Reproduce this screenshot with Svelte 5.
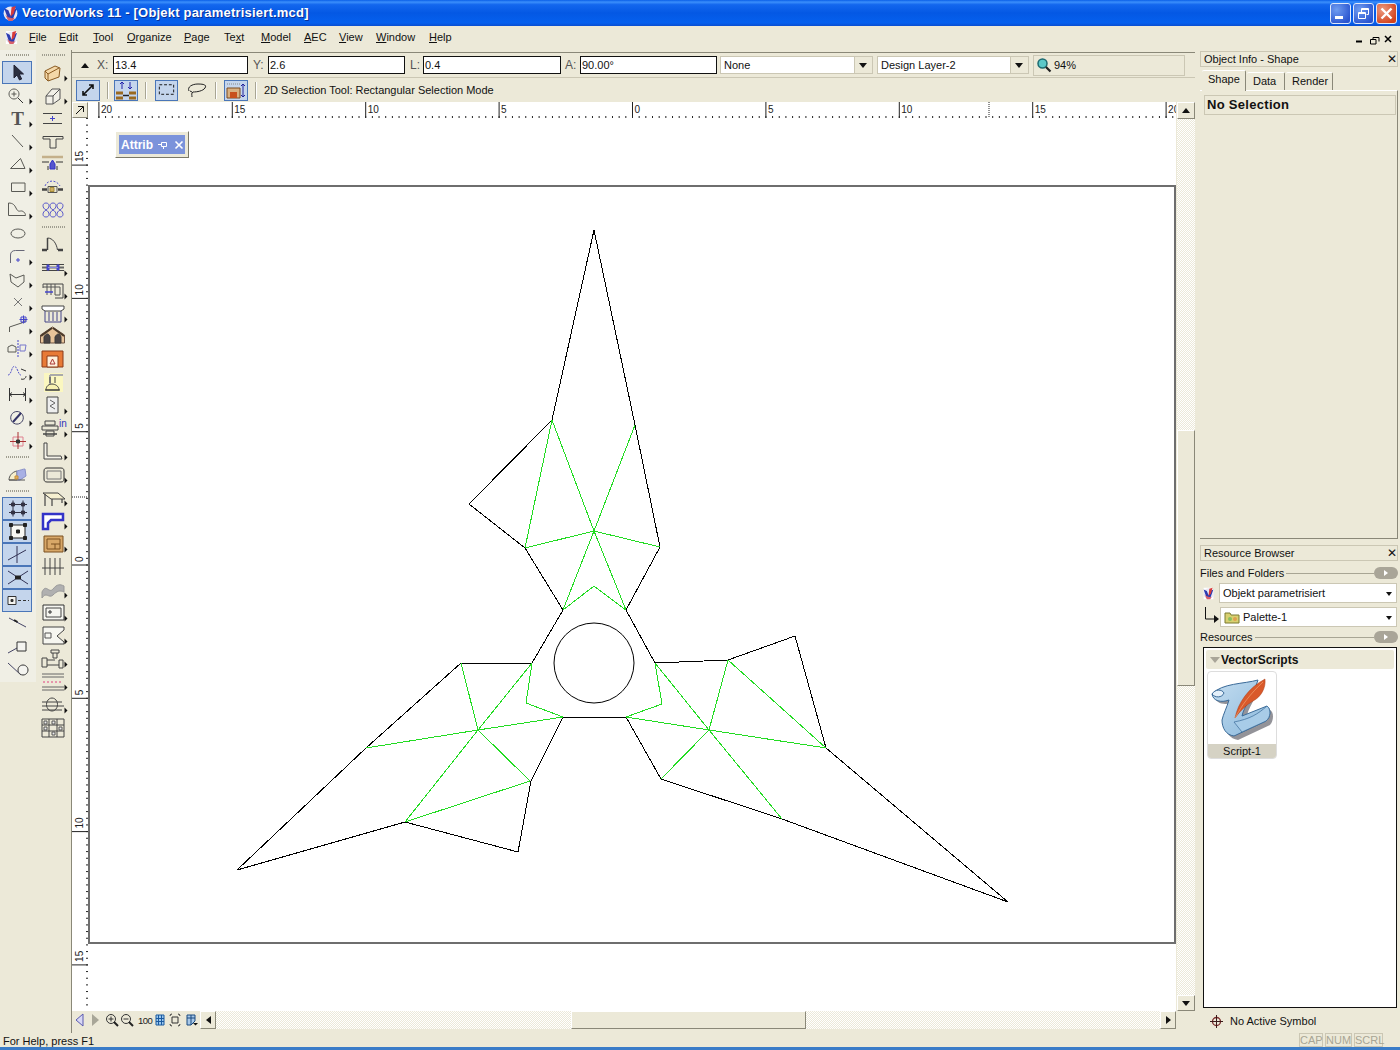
<script>
  const menus = [['F', 'ile', 29], ['E', 'dit', 59], ['T', 'ool', 93], ['O', 'rganize', 127], ['P', 'age', 184], ['Te', 'xt', 224, 1], ['M', 'odel', 261], ['A', 'EC', 304], ['V', 'iew', 339], ['W', 'indow', 376], ['H', 'elp', 429]];

  const g = '#5a5a55';
  // each part: [path, stroke, fill]
  const leftTools = [
    { on: 1, parts: [['M14 4v13l3-3 2.5 5 2.2-1-2.5-5h4.3z', '#223', '#2b3040']] },
    { fly: 1, parts: [['M14 5a5 5 0 1 0 .01 0zM11.5 10h5M14 7.5v5', g], ['M18 14l5 5', '#333']] },
    { fly: 1, text: 'T' },
    { fly: 1, parts: [['M12 5l11 12', g]] },
    { fly: 1, parts: [['M10.5 15.5l10-10 4.5 10z', g]] },
    { fly: 1, parts: [['M11.5 7h13.5v8.5h-13.5z', g]] },
    { fly: 1, parts: [['M8.5 4v12.500h17c0-3-3-5-5-4.500s-3 0-4.500-3-3-5-7.500-5z', g]] },
    { parts: [['M11 11.500a7 4.500 0 1 0 14 0a7 4.500 0 1 0-14 0z', g]] },
    { fly: 1, parts: [['M10.500 18v-8c0-3 2-4.500 5-4.500h9', '#667'], ['M16 15h4M18 13v4', '#44c']] },
    { fly: 1, parts: [['M10 6l6 4 8-3 0 7-6 5-7-5z', g]] },
    { fly: 1, parts: [['M14 7l8 8M22 7l-8 8', '#777']] },
    { fly: 1, parts: [['M9.500 18v-5l12-4M21 9l4-1v-2l-1.500-2', g], ['M21 3h5v5h-5zM23.500 1.500v8M19.500 5.500h8', '#44c']] },
    { fly: 1, parts: [['M8 15v-5l4-2 4 2v5z', g], ['M18 3v17', '#44c', 'none', 1, '2 1'], ['M20 8h6l-1 6h-5z', '#77c']] },
    { fly: 1, parts: [['M8 15c2 0 3-3 4-6s3-4 5 0 2 6 4 6', '#55c', 'none', 1, '2 1'], ['M21 9l5 2M21 19c3 1 5-1 5-3', '#333']] },
    { fly: 1, parts: [['M9.500 5v13M25.500 5v13M9.500 11.500h16M12 9.500l-2.500 2 2.500 2M23 9.500l2.500 2-2.500 2', '#333']] },
    { fly: 1, parts: [['M17 5.500a6.300 6.300 0 1 0 .01 0z', '#446'], ['M13 16l8-9', '#336', 'none', 2]] },
    { fly: 1, parts: [['M13 8h10v9h-10z', '#e08090'], ['M18 3v17M10 12.500h16', '#a33'], ['M16.500 11h3v3h-3z', '#333', '#333']] },
    { gap: 1, parts: [['M9 17c0-4 3-8 8-9v9z', '#555', '#f6eecc'], ['M17 8c4-1 6-2 8-2l1 7-6 4h-3z', '#8890c8', '#a8b0e4'], ['M9 17h16', '#555'], ['M15 13h3v3h-3z', '#c89038', '#e0b060']] },
    { gap: 1, on: 1, parts: [['M9 7.500h18M9 15.500h18M13 3.500v16M23 3.500v16', '#334'], ['M11.500 6h3v3h-3zM21.500 6h3v3h-3zM11.500 14h3v3h-3zM21.500 14h3v3h-3z', '#334', '#334']] },
    { on: 1, parts: [['M11 5h14v13h-14z', '#222', '#f8f8f4'], ['M9.500 3.500h3v3h-3zM23.500 3.500h3v3h-3zM9.500 16.500h3v3h-3zM23.500 16.500h3v3h-3zM16.500 10h3v3h-3z', '#222', '#222']] },
    { on: 1, parts: [['M17 3v17M8 17l18-10', '#335']] },
    { on: 1, parts: [['M8 5l20 13M8 18l20-13', '#335'], ['M15.500 10h5v3h-5z', '#222', '#222']] },
    { on: 1, parts: [['M8 7.500h8v8h-8z', '#333', '#f4f4f0'], ['M11 10.500h2v2h-2z', '#333', '#333'], ['M18 11.500h11', '#333', 'none', 1, '3 2']] },
    { parts: [['M9 6l17 9', '#446'], ['M14 8l3.500 2', '#222', 'none', 2]] },
    { parts: [['M8 18l9-5', '#446'], ['M17 7h9v9h-9z', '#333', '#f4f4f0']] },
    { parts: [['M8 5l13 12', '#446'], ['M23 7a5 5 0 1 0 .01 0z', '#333', '#f4f4f0']] },
  ];

  const o = '#8a5a20';
  const rightTools = [
    { fly: 1, parts: [['M10 10l10-5 5 2-1 9-11 4-3-3z', o, '#f4d8a8'], ['M10 10l3 3 11-6M13 13v7', o]] },
    { fly: 1, parts: [['M11 12l6-7h8v10l-7 5h-7z', '#555', '#f2f0e8'], ['M11 12h7v8M18 12l7-7', '#555']] },
    { parts: [['M8 6.500h19M8 16.500h19', '#444', 'none', 1.200], ['M17.500 9v5M15 11.500h5', '#44c']] },
    { parts: [['M8 6.500h20v2.500h-7v9h-6v-9h-7z', '#444']] },
    { parts: [['M7 4h21', '#c4b08a', 'none', 2.500], ['M7 9h7M21 9h7', '#333', 'none', 1], ['M15 16v-5l2.500-4 2.500 4v5z', '#33c', '#55c'], ['M13 17v-4M22 17v-4', '#333']] },
    { parts: [['M7 13.500h5M23 13.500h5', '#444', 'none', 2.500], ['M13 10.500h9v6h-9z', '#555'], ['M10 10c2-6 11-7 15 0', '#55c', 'none', 1, '2 1.500'], ['M15 11.500h4v4h-4z', '#a38a3a', '#d0b060']] },
    { parts: [['M11 4c-4 0-4 5 0 7-4 2-4 7 0 7s4-5 0-7c4-2 4-7 0-7zM18 4c-4 0-4 5 0 7-4 2-4 7 0 7s4-5 0-7c4-2 4-7 0-7zM25 4c-4 0-4 5 0 7-4 2-4 7 0 7s4-5 0-7c4-2 4-7 0-7z', '#5a5acc']] },
    { gap: 1, parts: [['M7 17h5M23 17h5', '#444', 'none', 2.500], ['M12.500 17v-12c5 0 9 5 10 12', '#444'], ['M12.500 5v12', '#444', 'none', 1.500]] },
    { fly: 1, parts: [['M7 8.500h22M7 14.500h22', '#444'], ['M7 11.500h22', '#666', 'none', 2], ['M12 9h2v5h-2zM22 9h2v5h-2z', '#44c', '#44c'], ['M13 11.500h10', '#88d']] },
    { fly: 1, parts: [['M8 5h20v14h-8', '#444'], ['M8 8h17v8h-5M8 5v4M12 5v11M16 5v11M20 5v11', '#555'], ['M10 13h8', '#44c', 'none', 1.500]] },
    { fly: 1, parts: [['M7 4h22v3l-3 2h-16l-3-2z', '#444', '#fff'], ['M10 9v11h16v-11M14 10v9M18 10v9M22 10v9', '#448']] },
    { parts: [['M17.500 2l12 8v8h-24v-8z', '#6a5040', '#e8c49a'], ['M9 18v-6c2-4 5-4 6 0v6zM20 18v-6c2-4 5-4 6 0v6z', '#3a3a3a', '#4a4444'], ['M17 3l-11 8M18 3l11 8', '#4a3a2a', 'none', 2]] },
    { parts: [['M7 3h21v16h-21z', '#8a3a18', '#e87a36'], ['M12 8h11v11h-11z', '#8a3a18', '#fff0dc'], ['M15 16l2.500-5 2.500 5z', '#a33', 'none']] },
    { y: 1, parts: [['M15 4h13M15 4v9', '#aaa', 'none', 2], ['M15 6v6M20 6v6', '#444'], ['M11 19c0-4 3-6 6-6s7 2 7 6z', '#444', '#f6f0b0'], ['M10 19h15', '#444', 'none', 1.200]] },
    { fly: 1, parts: [['M12 3h11v16h-11z', '#444', '#eee'], ['M15 6l5 3-5 3 5 3', '#666']] },
    { fly: 1, blue: 'in', parts: [['M10 4h10v4h-10zM7 9h16v4H7zM11 14h8v5h-8z', '#444'], ['M8 17h14', '#444', 'none', 1.500]] },
    { fly: 1, parts: [['M9 3h3v13h14l1 3h-18z', '#444', '#f4f2e8']] },
    { fly: 1, parts: [['M9 8c0-2 1-3 3-3h14c2 0 3 1 3 3v8c0 2-1 3-3 3h-14c-2 0-3-1-3-3z', '#333'], ['M12 8h14v8h-14z', '#777']] },
    { fly: 1, parts: [['M8 7h15l7 6h-14z', '#444', '#f6f0d0'], ['M10 8v12M17 13v7M27 13v4', '#444', 'none', 1.200]] },
    { fly: 1, parts: [['M8 5h20v6h-12l-3 3v6h-5z', '#3333c8', '#fff', 2.500]] },
    { fly: 1, parts: [['M9 4h19v16h-19z', '#7a5020', '#d8a868'], ['M12 7h13v10h-13zM16 12h9M20 12v5', '#7a5020']] },
    { parts: [['M10 3v17M15 3v17M20 3v17M25 3v17M7 13h22', '#444']] },
    { fly: 1, parts: [['M7 14c4-9 7 2 11-3s7-5 11-3v6c-4-2-7-1-11 3s-7-4-11 3z', '#999', '#b0b0b0']] },
    { fly: 1, parts: [['M8 4h21v15h-21z', '#333', '#f6f6f0'], ['M11 7h15v9h-15z', '#444'], ['M14 10h2v2h-2z', '#333']] },
    { fly: 1, parts: [['M8 3h21v3l-7 6 7 6v2h-21z', '#444', '#f6f6f0'], ['M10 9h6v5h-6z', '#555']] },
    { fly: 1, parts: [['M7 11h5v9h-5zM12 13h8M12 18h12M24 13h4v8h-4zM16 3h8v3h-8zM18 6v5h4v-5', '#444']] },
    { fly: 1, parts: [['M7 4h22M7 7h22M7 17h22M7 20h22', '#666'], ['M8 12h20', '#e04080', 'none', 1, '2 2']] },
    { fly: 1, parts: [['M17 5a5.500 6.500 0 1 0 .01 0z', '#444'], ['M7 9h20M7 13h22M7 17h20', '#444']] },
    { parts: [['M7 3h22v18h-22zM7 9h22M7 15h22M14 3v18M22 3v18', '#444'], ['M9 5h3v3H9zM17 5h3v3h-3zM24 11h3v3h-3zM9 11h3v3H9zM17 16h3v3h-3z', '#555', '#eee']] },
  ];

  const base = 632.5;
  const step = 133.4;
  const hLabels = [];
  for (let n = -4; n <= 4; n++) hLabels.push({ x: base + n * step, t: String(Math.abs(n) * 5) });
  const hTicks = [];
  for (let x = base - 80 * 6.67; x < 1176; x += 6.67) hTicks.push(x);

  const vLabels = [];
  for (let n = -3; n <= 3; n++) vLabels.push({ y: 565 + n * 133.3, t: String(Math.abs(n) * 5) });
  const vTicks = [];
  for (let y = 565 - 67 * 6.665; y < 1011; y += 6.665) vTicks.push(y);

  const outline = '552,420 594,230 635,425 660,547 626,610 655,663 728,660 795,636 826,748 1008,902 782,819 661,779 626,717 563,717 531,781 518,852 405,822 237,870 366,748 461,663 532,663 563,610 525,548 469,504';
  const green = [
    'M594 531L552 420M594 531L635 425M594 531L525 548M594 531L660 547M594 531L563 610M594 531L626 610M552 420L525 548M563 610L594 586L626 610',
    'M478 730L461 663M478 730L532 663M478 730L366 748M478 730L563 717M478 730L405 822M478 730L530 781M405 822L530 781M532 663L526 703L563 717',
    'M709 730L626 717M709 730L655 663M709 730L728 660M709 730L826 748M709 730L661 779M709 730L782 819M728 660L826 748M655 663L662 704L626 717',
  ];
</script>

{#snippet tool(item)}
  <div class="tool" class:on={item.on} class:lamp={item.y}>
    <svg width="36" height="23" viewBox="0 0 36 23">
      {#if item.text}
        <text x="17.5" y="18" class="t-glyph" text-anchor="middle">{item.text}</text>
      {/if}
      {#if item.parts}
        {#each item.parts as [d, stroke, fill, sw, dash]}
          <path {d} {stroke} fill={fill || 'none'} stroke-width={sw || 1} stroke-dasharray={dash} />
        {/each}
      {/if}
      {#if item.blue}
        <text x="24" y="10" class="t-in">{item.blue}</text>
      {/if}
      {#if item.fly}
        <path d="M29.500 14.500l3 3-3 3z" fill="#111" />
      {/if}
    </svg>
  </div>
{/snippet}

{#snippet vwLogo(size, plate)}
  <svg width={size} height={size} viewBox="0 0 16 16">
    <path d="M2 1h10l2 2v12H2z" fill={plate} />
    <circle cx="8" cy="8" r="6.500" fill="#e8e8f4" />
    <path d="M2 3l4 11h4L14 3l-4 2-2 5-2-5z" fill="#2c3cb0" />
    <path d="M9 2l4-1-2 7-3 3z" fill="#d83a3a" />
    <path d="M3 9c2 3 6 4 9 3l-2 3H6z" fill="#d8606a" />
  </svg>
{/snippet}

{#snippet grip()}
  <div class="grip"></div>
{/snippet}

<div class="screen">
  <header class="titlebar">
    <span class="tlogo">{@render vwLogo(17, 'transparent')}</span>
    <span class="ttext">VectorWorks 11 - [Objekt parametrisiert.mcd]</span>
    <span class="tbtns">
      <span class="wbtn"><i class="w-min"></i></span>
      <span class="wbtn">
        <svg width="21" height="21" viewBox="0 0 21 21"><path d="M8.500 5.500h7v6h-2M5.500 9.500h7v6h-7zM8.500 5.500v4M5.500 10.500h7M8.500 6.500h7" stroke="#fff" fill="none" /></svg>
      </span>
      <span class="wbtn close">
        <svg width="21" height="21" viewBox="0 0 21 21"><path d="M5.500 5.500l10 10M15.500 5.500l-10 10" stroke="#fff" stroke-width="2.400" fill="none" /></svg>
      </span>
    </span>
  </header>

  <nav class="menubar">
    <span class="mlogo">{@render vwLogo(15, '#fff')}</span>
    {#each menus as m, i}
      <span class="menu" style="width: {(menus[i + 1] ? menus[i + 1][2] : m[2] + 30) - m[2]}px">
        {#if m[3]}Te<u>x</u>t{:else}<u>{m[0]}</u>{m[1]}{/if}
      </span>
    {/each}
    <span class="mdi">
      <svg width="44" height="12" viewBox="0 0 44 12">
        <path d="M3 8.500h6" stroke="#000" stroke-width="2" />
        <path d="M20 4.500h6v4M17.500 6.500h5.500v4.500h-5.500zM20 4.500v2" stroke="#000" fill="none" />
        <path d="M32 3l6 6M38 3l-6 6" stroke="#000" stroke-width="1.500" />
      </svg>
    </span>
  </nav>

  <main class="main">
    <aside class="palette">
      <div class="pcol one">
        {@render grip()}
        {#each leftTools as item}
          {#if item.gap}
            {@render grip()}
          {/if}
          {@render tool(item)}
        {/each}
      </div>
      <div class="pcol two">
        {@render grip()}
        {#each rightTools as item}
          {#if item.gap}
            {@render grip()}
          {/if}
          {@render tool(item)}
        {/each}
      </div>
    </aside>

    <section class="center">
      <div class="mode1">
        <span class="tri-up"></span>
        <span class="fl x">X:</span><span class="inp">13.4</span>
        <span class="fl">Y:</span><span class="inp y">2.6</span>
        <span class="fl l">L:</span><span class="inp l">0.4</span>
        <span class="fl a">A:</span><span class="inp y">90.00°</span>
        <span class="sel none">None<span class="sel-btn"></span></span>
        <span class="sel layer">Design Layer-2<span class="sel-btn"></span></span>
        <span class="zoomread">
          <svg width="16" height="16" viewBox="0 0 16 16">
            <circle cx="6.500" cy="6.500" r="4.500" fill="#5cc8c8" stroke="#1d6a70" stroke-width="1.500" />
            <path d="M10 10l4.500 4.500" stroke="#222" stroke-width="2.200" />
          </svg>
          94%
        </span>
      </div>

      <div class="mode2">
        <span class="mbtn on">
          <svg width="22" height="22" viewBox="0 0 22 22"><path d="M6 16L16 6M6 12v4h4M12 6h4v4" stroke="#111" stroke-width="1.600" fill="none" /></svg>
        </span>
        <i class="sep"></i>
        <span class="mbtn on m6">
          <svg width="22" height="22" viewBox="0 0 22 22">
            <path d="M1 14h7M14 14h7M1 19h7M14 19h7" stroke="#9a6a20" stroke-width="3" />
            <path d="M8 16.500h6" stroke="#222" stroke-width="1.500" />
            <path d="M7 10V3M5 5l2-2 2 2M15 3v7M13 8l2 2 2-2" stroke="#2222aa" fill="none" />
          </svg>
        </span>
        <i class="sep"></i>
        <span class="mbtn on m9 w23">
          <svg width="22" height="22" viewBox="0 0 22 22"><rect x="3.500" y="5.500" width="15" height="10" stroke="#111" stroke-dasharray="3 2" fill="none" /></svg>
        </span>
        <span class="mbtn w23">
          <svg width="22" height="22" viewBox="0 0 22 22"><path d="M3 12c-2-4 3-7 9-7s9 1 7 4-8 4-12 4c-2 1-1 3-1 5M6 13l-2-1" stroke="#222" fill="none" /></svg>
        </span>
        <i class="sep"></i>
        <span class="mbtn on m8">
          <svg width="22" height="22" viewBox="0 0 22 22">
            <path d="M2 5h13" stroke="#888" stroke-dasharray="1 1" />
            <path d="M2 9h13v10h-13z" fill="#d8b080" stroke="#7a4a20" />
            <path d="M5 13h7v6h-7z" fill="#c8501c" />
            <path d="M18 5v13M16 7l2-2 2 2M16 16l2 2 2-2" stroke="#22229a" fill="none" />
          </svg>
        </span>
        <i class="sep"></i>
        <span class="modetext">2D Selection Tool: Rectangular Selection Mode</span>
      </div>

      <div class="doc">
        <div class="corner">
          <svg width="12" height="12" viewBox="0 0 12 12"><path d="M2 10l7-7M4 2.500h5.500v5.500" stroke="#111" fill="none" /></svg>
        </div>
        <svg class="hruler" width="1088" height="16" viewBox="88 102 1088 16">
          {#each hTicks as x}
            <path d="M{x} 116v2" stroke="#222" />
          {/each}
          {#each hLabels as l}
            <path d="M{l.x} 102v16" stroke="#222" />
            <text x={l.x + 2} y="113" class="rl">{l.t}</text>
          {/each}
          <path d="M989 102v16" stroke="#222" stroke-dasharray="1 1" />
        </svg>
        <div class="sb-btn up"><i class="a-up"></i></div>

        <svg class="vruler" width="16" height="893" viewBox="72 118 16 893">
          {#each vTicks as y}
            <path d="M86 {y}h2" stroke="#222" />
          {/each}
          {#each vLabels as l}
            <path d="M72 {l.y}h16" stroke="#222" />
            <text transform="translate(83 {l.y - 3}) rotate(-90)" class="rl">{l.t}</text>
          {/each}
          <path d="M72 497h16" stroke="#222" stroke-dasharray="1 1" />
        </svg>

        <div class="canvas">
          <svg class="drawing" width="1088" height="893" viewBox="88 118 1088 893">
            <rect x="89" y="186" width="1086" height="757" fill="#fff" stroke="#6e6e6e" stroke-width="2" />
            <polygon points={outline} fill="none" stroke="#000" shape-rendering="crispEdges" />
            {#each green as d}
              <path {d} fill="none" stroke="#22dc22" shape-rendering="crispEdges" />
            {/each}
            <circle cx="594" cy="663" r="40" fill="none" stroke="#000" />
          </svg>
          <div class="attrib">
            <span class="attrib-bar">
              <b>Attrib</b>
              <svg width="10" height="10" viewBox="0 0 10 10"><path d="M3.500 2.500h5v4h-5zM0 4.500h3.500M5.500 6.500v2.500" stroke="#fff" fill="none" /></svg>
              <svg class="ax" width="10" height="10" viewBox="0 0 10 10"><path d="M1.500 1.500l7 7M8.500 1.500l-7 7" stroke="#fff" stroke-width="1.600" /></svg>
            </span>
          </div>
        </div>

        <div class="vscroll">
          <div class="track t1"></div>
          <div class="thumb-v"></div>
          <div class="track t2"></div>
          <div class="sb-btn"><i class="a-down"></i></div>
        </div>

        <div class="hbar">
          <div class="navicons">
            <svg width="128" height="19" viewBox="72 1011 128 19">
              <path d="M83 1014v12l-7-6z" fill="#d8d8f4" stroke="#5a5ab0" />
              <path d="M92 1014v12l7-6z" fill="#a8a698" />
              <circle cx="111" cy="1019" r="4.500" fill="none" stroke="#333" />
              <path d="M108.500 1019h5M111 1016.500v5" stroke="#333" />
              <path d="M114 1022l4 4" stroke="#222" stroke-width="2" />
              <circle cx="126" cy="1019" r="4.500" fill="none" stroke="#333" />
              <path d="M123.500 1019h5" stroke="#333" />
              <path d="M129 1022l4 4" stroke="#222" stroke-width="2" />
              <text x="138" y="1024" class="nav100">100</text>
              <path d="M156 1015h8v10h-8zM156 1018.500h8M156 1021.500h8M158.500 1015v10M161.500 1015v10" fill="#9cc8ee" stroke="#1a5aa0" />
              <path d="M172 1017h6v6h-6z" fill="none" stroke="#333" />
              <path d="M170 1016a2 2 0 0 1 2-2M178 1014a2 2 0 0 1 2 2M180 1024a2 2 0 0 1-2 2M172 1026a2 2 0 0 1-2-2" fill="none" stroke="#333" />
              <path d="M187 1015h8v6l-4 4h-4zM187 1018h8M191 1015v10" fill="#a8c8e8" stroke="#1a4a80" />
              <path d="M193 1023h5l-2.500 2.500z" fill="#111" />
            </svg>
          </div>
          <div class="sb-btn h"><i class="a-left"></i></div>
          <div class="track ht1"></div>
          <div class="thumb-h"></div>
          <div class="track ht2"></div>
          <div class="sb-btn h"><i class="a-right"></i></div>
        </div>
        <div class="bcorner"></div>
      </div>
    </section>

    <aside class="side">
      <div class="ptitle first">Object Info - Shape<span class="px">✕</span></div>
      <div class="tabs">
        <span class="tab active">Shape</span>
        <span class="tab">Data</span>
        <span class="tab">Render</span>
      </div>
      <div class="oipanel">
        <div class="nosel">No Selection</div>
      </div>

      <div class="ptitle second">Resource Browser<span class="px">✕</span></div>
      <div class="rowhead"><span>Files and Folders</span><i class="rule"></i><span class="pill"><i class="a-right white"></i></span></div>
      <div class="selrow">
        <span class="sfile">{@render vwLogo(13, '#fff')}</span>
        <span class="bsel">Objekt parametrisiert<i class="a-down small"></i></span>
      </div>
      <div class="selrow two">
        <svg class="elbow" width="16" height="20" viewBox="0 0 16 20">
          <path d="M1.500 0v12h10" stroke="#111" fill="none" />
          <path d="M10 8l5 4-5 4z" fill="#111" />
        </svg>
        <span class="bsel">
          <svg class="folder" width="16" height="14" viewBox="0 0 16 14">
            <path d="M1 3h5l1 2h8v8H1z" fill="#d8d070" stroke="#7a7a30" />
            <circle cx="6" cy="9" r="2" fill="#8abf60" />
            <circle cx="11" cy="9" r="2" fill="#e0a050" />
          </svg>
          Palette-1<i class="a-down small"></i>
        </span>
      </div>
      <div class="rowhead res"><span>Resources</span><i class="rule"></i><span class="pill"><i class="a-right white"></i></span></div>
      <div class="reslist">
        <div class="reshead"><i class="a-down gray"></i><b>VectorScripts</b></div>
        <div class="tile">
          <svg width="68" height="72" viewBox="0 0 68 72">
            <defs>
              <linearGradient id="scr" x1="0" y1="0" x2="1" y2="1">
                <stop offset="0" stop-color="#c4ddf0" />
                <stop offset="1" stop-color="#8ab8dc" />
              </linearGradient>
            </defs>
            <path d="M6 24C8 32 16 33 24 31C22 38 18 46 17 52C17 60 22 67 30 68L62 53C66 48 66 40 62 38L38 47C40 36 48 26 53 12C38 15 16 14 6 24Z" fill="#3a3a45" opacity=".55" />
            <path d="M4 22C5 29 13 31 21 28C19 35 15 43 14 48C14 56 18 63 26 64L58 49C63 45 63 37 59 34L34 44C36 34 45 24 50 8C36 12 14 11 4 22Z" fill="url(#scr)" stroke="#3a6a98" />
            <path d="M4 22C7 17 14 17 16 21C14 26 7 26 4 22Z" fill="#e4f0fa" stroke="#3a6a98" />
            <path d="M26 50C42 47 50 42 59 34C63 37 63 45 58 49L34 60Z" fill="#a8cce8" stroke="#3a6a98" stroke-width=".7" />
            <path d="M27 46C30 31 40 16 57 7C58 16 53 25 45 29C38 33 32 39 27 46Z" fill="#d9592a" stroke="#a83a14" stroke-width=".5" />
            <path d="M27 46C34 33 42 22 55 10" fill="none" stroke="#f0a070" stroke-width=".7" />
          </svg>
          <div class="tile-label">Script-1</div>
        </div>
      </div>
      <div class="symbol">
        <svg width="15" height="15" viewBox="0 0 15 15">
          <circle cx="7.500" cy="7.500" r="4" fill="none" stroke="#7a2a2a" stroke-width="1.300" />
          <path d="M7.500 1v13M1 7.500h13" stroke="#3a1a1a" />
        </svg>
        <span>No Active Symbol</span>
      </div>
    </aside>
  </main>

  <footer class="status">
    <span>For Help, press F1</span>
    <span class="keys"><span class="key k1">CAP</span><span class="key k2">NUM</span><span class="key k3">SCRL</span></span>
  </footer>
  <div class="taskedge"></div>
</div>

<style>
  :global(body) { margin: 0; background: #ece9d8; }
  .screen {
    width: 1400px;
    height: 1050px;
    display: flex;
    flex-direction: column;
    overflow: hidden;
    background: #ece9d8;
    color: #111;
    font: 11px/14px "Liberation Sans", sans-serif;
  }
  .titlebar {
    height: 26px;
    flex: none;
    display: flex;
    align-items: center;
    background: linear-gradient(#0a5fe8 0, #3b8ffb 8%, #1367ee 18%, #0458e4 50%, #0560ee 88%, #0a4ed0 100%);
    color: #fff;
    padding-left: 2px;
    box-sizing: border-box;
  }
  .tlogo { width: 20px; height: 17px; }
  .ttext { font: bold 13px/20px "Liberation Sans", sans-serif; letter-spacing: .2px; text-shadow: 1px 1px #0a2f96; }
  .tbtns { margin-left: auto; display: flex; gap: 2px; padding-right: 3px; }
  .wbtn {
    width: 21px;
    height: 21px;
    box-sizing: border-box;
    border: 1px solid #dfe8fb;
    border-radius: 3px;
    background: radial-gradient(circle at 30% 30%, #6f9cf0, #2a55d0 80%);
    position: relative;
    display: block;
  }
  .wbtn svg { position: absolute; left: -1px; top: -1px; }
  .w-min { position: absolute; left: 4px; top: 12px; width: 8px; height: 3px; background: #fff; }
  .wbtn.close { background: radial-gradient(circle at 30% 30%, #ec9a80, #d2421c 80%); }

  .menubar {
    height: 24px;
    flex: none;
    display: flex;
    align-items: center;
    box-sizing: border-box;
    padding-bottom: 2px;
  }
  .mlogo { width: 29px; height: 15px; padding-left: 4px; box-sizing: border-box; }
  .menu { display: block; }
  .mdi { margin-left: auto; padding: 6px 3px 0 0; }

  .main { flex: 1; display: flex; min-height: 0; }
  .palette {
    width: 71px;
    flex: none;
    display: flex;
    border-right: 1px solid #8a8878;
    box-sizing: content-box;
  }
  .pcol { width: 36px; height: 100%; }
  .pcol.two { width: 35px; }
  .pcol.one { background: linear-gradient(#f0efe5 0 632px, #ece9d8 632px); }
  .grip {
    height: 2px;
    margin: 4px 6px 5px;
    background: repeating-linear-gradient(90deg, #a09e90 0 1px, transparent 1px 2px);
  }
  .tool { height: 23px; width: 36px; position: relative; }
  .tool svg { display: block; position: relative; }
  .two .tool svg { left: -1px; }
  .tool.on::before {
    content: "";
    position: absolute;
    left: 2px;
    width: 30px;
    top: 0;
    height: 23px;
    box-sizing: border-box;
    background: #c4d5ec;
    border: 1px solid #4a76b8;
  }
  .tool.lamp svg { background: linear-gradient(#0000 0 2px, #fbf7c0 2px 21px, #0000 21px) 9px 0 / 19px 23px no-repeat; }
  .t-glyph { font: bold 19px "Liberation Serif", serif; fill: #555; }
  .t-in { font: 10px "Liberation Sans", sans-serif; fill: #3333bb; }

  .center { width: 1123px; flex: none; display: flex; flex-direction: column; padding-top: 2px; }
  .mode1 {
    height: 26px;
    flex: none;
    box-sizing: border-box;
    border-top: 1px solid #8a8878;
    border-bottom: 1px solid #cbc7b4;
    display: flex;
    align-items: center;
    position: relative;
  }
  .tri-up { width: 0; height: 0; border: 4px solid transparent; border-bottom: 5px solid #111; border-top: 0; margin: 0 8px 0 9px; }
  .fl { color: #555; margin-left: 5px; width: 15px; font-size: 12px; }
  .fl.x { margin-left: 0; width: 16px; }
  .fl.l { width: 13px; }
  .fl.a { margin-left: 4px; }
  .inp {
    height: 18px;
    width: 135px;
    box-sizing: border-box;
    border: 1px solid #111;
    background: #fff;
    padding-left: 1px;
    line-height: 16px;
  }
  .inp.y { width: 137px; }
  .inp.l { width: 138px; }
  .sel {
    height: 18px;
    box-sizing: border-box;
    border: 1px solid #cbc7b4;
    background: #fff;
    padding-left: 3px;
    line-height: 16px;
    position: relative;
    display: block;
  }
  .sel.none { width: 153px; margin-left: 3px; }
  .sel.layer { width: 152px; margin-left: 4px; }
  .sel-btn { position: absolute; right: 0; top: 0; width: 17px; height: 16px; background: #ece9d8; border-left: 1px solid #cbc7b4; }
  .sel-btn::after { content: ""; position: absolute; left: 4px; top: 6px; border: 4px solid transparent; border-top: 5px solid #111; border-bottom: 0; }
  .zoomread {
    width: 152px;
    height: 21px;
    margin-left: 4px;
    box-sizing: border-box;
    border: 1px solid #cbc7b4;
    display: flex;
    align-items: center;
    gap: 2px;
    padding-left: 2px;
  }

  .mode2 { height: 24px; flex: none; display: flex; align-items: center; padding-left: 4px; }
  .mbtn { width: 24px; height: 21px; box-sizing: border-box; display: flex; align-items: center; justify-content: center; margin-right: 7px; flex: none; }
  .mbtn.on { background: #c4d5ec; border: 1px solid #4a76b8; }
  .mbtn.w23 { width: 23px; }
  .mbtn.m6 { margin-left: 6px; }
  .mbtn.m8 { margin-left: 8px; }
  .mbtn.m9 { margin-left: 9px; }
  .sep { width: 1px; height: 17px; background: #a8a594; box-shadow: 1px 0 #fff; flex: none; }
  .modetext { margin-left: 8px; }

  .doc {
    flex: 1;
    display: grid;
    grid-template-columns: 16px 1088px 19px;
    grid-template-rows: 16px 893px 19px;
    min-height: 0;
  }
  .corner {
    background: #ece9d8;
    box-sizing: border-box;
    border: 1px solid;
    border-color: #fff #8a8878 #8a8878 #fff;
    display: flex;
    align-items: center;
    justify-content: center;
  }
  .hruler, .vruler { display: block; background: #fff; }
  .rl { font: 10px "Liberation Sans", sans-serif; fill: #222; }
  .nav100 { font: 9.500px "Liberation Sans", sans-serif; fill: #222; letter-spacing: -.5px; }
  .canvas { background: #fff; position: relative; overflow: hidden; }
  .drawing { display: block; }
  .attrib {
    position: absolute;
    left: 27px;
    top: 13px;
    width: 74px;
    height: 27px;
    box-sizing: border-box;
    background: #ece9d8;
    border: 1px solid;
    border-color: #fff #7a7868 #7a7868 #fff;
    padding: 3px;
  }
  .attrib-bar {
    display: flex;
    align-items: center;
    height: 19px;
    background: #7b93db;
    color: #fff;
    padding-left: 2px;
    font: bold 12px "Liberation Sans", sans-serif;
  }
  .attrib-bar svg { margin-left: 5px; }
  .attrib-bar .ax { margin-left: 6px; }

  .sb-btn {
    width: 18px;
    height: 16px;
    box-sizing: border-box;
    background: #ece9d8;
    border: 1px solid;
    border-color: #fff #8a8878 #8a8878 #fff;
    display: flex;
    align-items: center;
    justify-content: center;
    flex: none;
  }
  .sb-btn.up { height: 17px; margin-left: 1px; position: relative; z-index: 1; }
  .sb-btn.h { height: 18px; width: 16px; }
  .a-up { border: 4px solid transparent; border-bottom: 5px solid #111; border-top: 0; }
  .a-down { border: 4px solid transparent; border-top: 5px solid #111; border-bottom: 0; display: block; }
  .a-left { border: 4px solid transparent; border-right: 5px solid #111; border-left: 0; }
  .a-right { border: 4px solid transparent; border-left: 5px solid #111; border-right: 0; }
  .track { background: repeating-conic-gradient(#fff 0 25%, #ece9d8 0 50%) 0 0 / 2px 2px; }
  .vscroll { display: flex; flex-direction: column; padding-left: 1px; }
  .vscroll .track { width: 18px; }
  .vscroll .t1 { height: 312px; }
  .vscroll .t2 { flex: 1; }
  .thumb-v { width: 18px; height: 256px; flex: none; box-sizing: border-box; background: #ece9d8; border: 1px solid; border-color: #fff #8a8878 #8a8878 #fff; }

  .hbar { grid-column: 1 / 3; display: flex; }
  .navicons { width: 128px; height: 19px; flex: none; }
  .navicons svg { display: block; }
  .ht1 { width: 355px; height: 18px; }
  .ht2 { flex: 1; height: 18px; }
  .thumb-h { width: 235px; height: 18px; flex: none; box-sizing: border-box; background: #ece9d8; border: 1px solid; border-color: #fff #8a8878 #8a8878 #fff; }
  .bcorner { background: #ece9d8; }

  .side { width: 198px; flex: none; margin-left: 5px; display: flex; flex-direction: column; }
  .ptitle {
    height: 16px;
    box-sizing: border-box;
    border: 1px solid #cbc7b4;
    line-height: 14px;
    padding-left: 3px;
    position: relative;
    flex: none;
  }
  .ptitle.first { margin-top: 1px; }
  .ptitle.second { margin-top: 6px; }
  .px { position: absolute; right: 0; top: 0; font: bold 12px/14px "DejaVu Sans", sans-serif; }
  .tabs { display: flex; height: 23px; padding-left: 2px; align-items: flex-end; flex: none; }
  .tab {
    height: 18px;
    line-height: 16px;
    box-sizing: border-box;
    padding: 0 6px;
    border-right: 1px solid #8a8878;
    border-top: 1px solid #fff;
    margin-right: 1px;
    border-radius: 2px 2px 0 0;
  }
  .tab.active { height: 21px; width: 44px; line-height: 17px; background: #ece9d8; margin-bottom: -1px; position: relative; z-index: 1; }
  .tab:nth-child(2) { width: 38px; }
  .tab:nth-child(3) { width: 47px; }
  .oipanel {
    height: 449px;
    flex: none;
    box-sizing: border-box;
    border-top: 1px solid #fff;
    border-bottom: 1px solid #8a8878;
    border-right: 1px solid #8a8878;
    padding: 4px 1px 0 4px;
  }
  .nosel {
    height: 20px;
    box-sizing: border-box;
    border: 1px solid #cbc7b4;
    font: bold 13px/18px "Liberation Sans", sans-serif;
    letter-spacing: .3px;
    padding-left: 2px;
  }
  .rowhead { display: flex; align-items: center; height: 14px; margin-top: 5px; flex: none; }
  .rowhead.res { margin-top: 3px; }
  .rule { flex: 1; height: 1px; background: #a8a594; margin-left: 2px; }
  .pill { width: 24px; height: 12px; background: #a9a598; border-radius: 6px; display: flex; align-items: center; justify-content: center; }
  .a-right.white { border-width: 3px; border-left: 4px solid #fff; border-right: 0; }
  .selrow { display: flex; align-items: center; height: 20px; margin-top: 3px; flex: none; }
  .selrow.two { margin-top: 4px; }
  .sfile { width: 19px; height: 13px; padding-left: 2px; box-sizing: border-box; }
  .bsel {
    flex: 1;
    height: 20px;
    box-sizing: border-box;
    border: 1px solid #cbc7b4;
    background: #fff;
    line-height: 18px;
    padding-left: 3px;
    position: relative;
    margin-right: 1px;
    display: flex;
    align-items: center;
  }
  .folder { margin-right: 3px; flex: none; }
  .elbow { margin-left: 4px; flex: none; }
  .a-down.small { position: absolute; right: 4px; top: 8px; border-width: 3px; border-top-width: 4px; }
  .reslist {
    height: 361px;
    margin: 3px 1px 0 3px;
    box-sizing: border-box;
    border: 1px solid #111;
    background: #fff;
    padding: 2px;
    flex: none;
  }
  .reshead {
    height: 19px;
    background: #ece9d8;
    display: flex;
    align-items: center;
    padding-left: 4px;
    border-radius: 2px;
    font: bold 12px "Liberation Sans", sans-serif;
  }
  .a-down.gray { border-top-color: #a9a598; border-width: 5px; border-top-width: 6px; margin-right: 1px; }
  .tile {
    width: 70px;
    height: 88px;
    margin-top: 2px;
    margin-left: 1px;
    box-sizing: border-box;
    border: 1px solid #ddd;
    border-radius: 4px;
    display: flex;
    flex-direction: column;
    overflow: hidden;
  }
  .tile svg { flex: none; }
  .tile-label { flex: 1; background: #d5d2c4; text-align: center; line-height: 15px; }
  .symbol { display: flex; align-items: center; height: 18px; margin-top: 4px; padding-left: 9px; gap: 6px; flex: none; }

  .status {
    height: 14px;
    flex: none;
    display: flex;
    align-items: center;
    justify-content: space-between;
    padding: 2px 0 0 3px;
    box-sizing: border-box;
  }
  .keys { display: flex; gap: 2px; margin-right: 17px; margin-top: -2px; }
  .key { height: 14px; box-sizing: border-box; border: 1px solid #cbc7b4; color: #a8a594; font-size: 11px; line-height: 13px; text-align: center; }
  .k1 { width: 24px; }
  .k2 { width: 27px; }
  .k3 { width: 29px; }
  .taskedge { height: 3px; flex: none; background: #3a7cc8; }
</style>
